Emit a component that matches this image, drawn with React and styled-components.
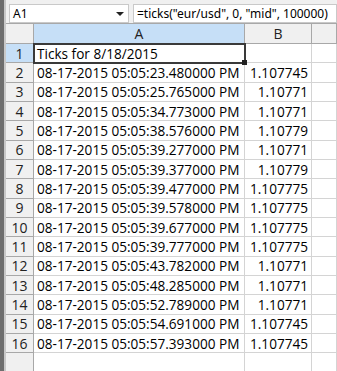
import React from "react";
import styled, { createGlobalStyle } from "styled-components";

const GlobalStyle = createGlobalStyle`
  html, body {
    margin: 0;
    padding: 0;
    background: #f0f0f0;
    overflow: hidden;
  }
`;

const rows = [
  ["08-17-2015 05:05:23.480000 PM", "1.107745"],
  ["08-17-2015 05:05:25.765000 PM", "1.10771"],
  ["08-17-2015 05:05:34.773000 PM", "1.10771"],
  ["08-17-2015 05:05:38.576000 PM", "1.10779"],
  ["08-17-2015 05:05:39.277000 PM", "1.10771"],
  ["08-17-2015 05:05:39.377000 PM", "1.10779"],
  ["08-17-2015 05:05:39.477000 PM", "1.107775"],
  ["08-17-2015 05:05:39.578000 PM", "1.107775"],
  ["08-17-2015 05:05:39.677000 PM", "1.107775"],
  ["08-17-2015 05:05:39.777000 PM", "1.107775"],
  ["08-17-2015 05:05:43.782000 PM", "1.10771"],
  ["08-17-2015 05:05:48.285000 PM", "1.10771"],
  ["08-17-2015 05:05:52.789000 PM", "1.10771"],
  ["08-17-2015 05:05:54.691000 PM", "1.107745"],
  ["08-17-2015 05:05:57.393000 PM", "1.107745"],
];

const Window = styled.div`
  display: flex;
  width: 337px;
  height: 371px;
  overflow: hidden;
`;

const Frame = styled.div`
  width: 4px;
  flex: none;
  background: #6e6e6e;
  border-right: 2px solid #c8c8c8;
`;

const Main = styled.div`
  flex: 1;
  display: flex;
  flex-direction: column;
  min-width: 0;
`;

const Toolbar = styled.div`
  display: flex;
  gap: 4px;
  height: 27px;
  padding: 4px 0 0 3px;
  box-sizing: border-box;
  font-family: "Noto Sans", "Open Sans", sans-serif;
  font-size: 12px;
  color: #000;
`;

const Box = styled.div`
  height: 19px;
  box-sizing: border-box;
  background: #fff;
  border: 1px solid #c9c9c9;
  display: flex;
  align-items: center;
  padding: 0 3px;
  width: ${(p) => p.$width};
  flex: ${(p) => (p.$grow ? 1 : "none")};
  position: relative;
  white-space: nowrap;
`;

const Arrow = styled.span`
  position: absolute;
  right: 4px;
  top: 7px;
  border-left: 4px solid transparent;
  border-right: 4px solid transparent;
  border-top: 4px solid #222;
`;

const Sheet = styled.div`
  display: grid;
  grid-template-columns: 28px 211px 67px 1fr;
  grid-template-rows: 20px repeat(17, 19.33px);
  background: #fff;
  border-top: 1px solid #a8a8a8;
  font-family: "Open Sans", "Noto Sans", sans-serif;
  font-size: 13.6px;
  color: #000;
`;

const Head = styled.div`
  background: ${(p) => (p.$active ? "#c6dff7" : "#f0f0f0")};
  border-right: 1px solid #a8a8a8;
  border-bottom: 1px solid #a8a8a8;
  display: flex;
  align-items: center;
  justify-content: center;
  color: #222;
  font-size: 14px;
  box-sizing: border-box;
`;

const Cell = styled.div`
  border-right: 1px solid #d4d4d4;
  border-bottom: 1px solid #d4d4d4;
  display: flex;
  align-items: center;
  justify-content: ${(p) => (p.$right ? "flex-end" : "flex-start")};
  padding: 0 3px;
  white-space: nowrap;
  overflow: visible;
  box-sizing: border-box;
  position: relative;
  ${(p) =>
    p.$selected &&
    `
    outline: 2px solid #3a3a3a;
    outline-offset: -1px;
    z-index: 1;
    &::after {
      content: "";
      position: absolute;
      right: -3px;
      bottom: -3px;
      width: 5px;
      height: 5px;
      background: #222;
    }
  `}
`;

export default function App() {
  return (
    <>
      <GlobalStyle />
      <Window>
        <Frame />
        <Main>
          <Toolbar>
            <Box $width="120px">
              A1
              <Arrow />
            </Box>
            <Box $grow>=ticks("eur/usd", 0, "mid", 100000)</Box>
          </Toolbar>
          <Sheet>
            <Head />
            <Head $active>A</Head>
            <Head>B</Head>
            <Head />

            <Head $active>1</Head>
            <Cell $selected>Ticks for 8/18/2015</Cell>
            <Cell />
            <Cell />

            {rows.map(([time, value], i) => (
              <React.Fragment key={i}>
                <Head>{i + 2}</Head>
                <Cell>{time}</Cell>
                <Cell $right>{value}</Cell>
                <Cell />
              </React.Fragment>
            ))}

            <Head />
            <Cell />
            <Cell />
            <Cell />
          </Sheet>
        </Main>
      </Window>
    </>
  );
}
